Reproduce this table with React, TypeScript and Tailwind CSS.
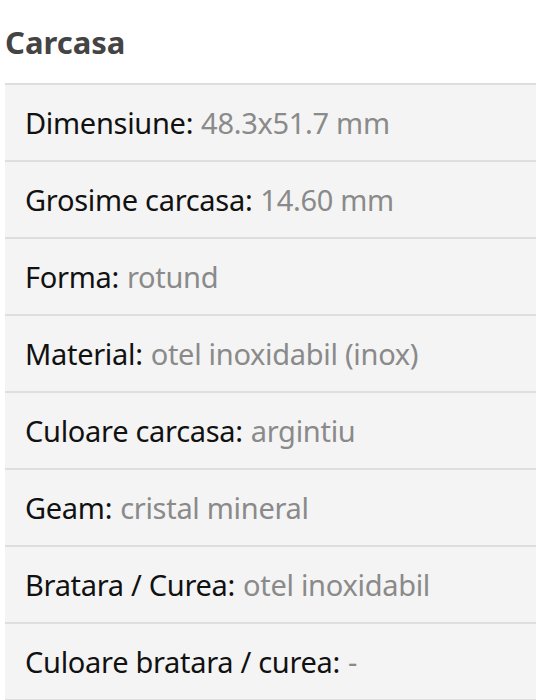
import React from "react";

const rows: [string, string][] = [
  ["Dimensiune", "48.3x51.7 mm"],
  ["Grosime carcasa", "14.60 mm"],
  ["Forma", "rotund"],
  ["Material", "otel inoxidabil (inox)"],
  ["Culoare carcasa", "argintiu"],
  ["Geam", "cristal mineral"],
  ["Bratara / Curea", "otel inoxidabil"],
  ["Culoare bratara / curea", "-"],
];

export default function App() {
  return (
    <div className="w-[536px] bg-white" style={{ fontFamily: '"Noto Sans", sans-serif' }}>
      <h2 className="pl-[5px] pt-[22px] h-[83px] text-[31px] font-bold text-[#444] leading-[40px]">Carcasa</h2>
      <div className="ml-[5px] border-b-2 border-[#dedede]">
        {rows.map(([k, v]) => (
          <div key={k} className="h-[77px] border-t-2 border-[#dedede] bg-[#f4f4f4] flex items-center pl-[20px] text-[29px] leading-none tracking-[-0.3px]">
            <span className="text-[#111]">{k}:</span>
            <span className="text-[#8a8a8a] ml-[8px]">{v}</span>
          </div>
        ))}
      </div>
    </div>
  );
}
